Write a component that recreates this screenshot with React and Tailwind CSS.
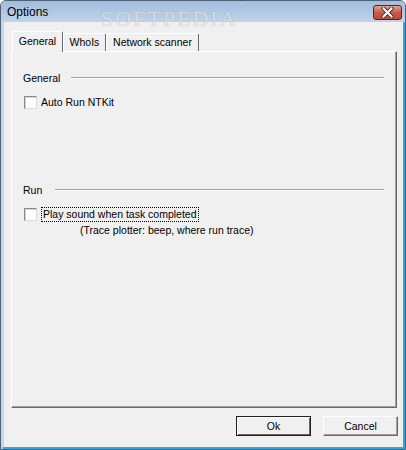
export default function App() {
  return (
    <div className="w-[406px] h-[450px] bg-white font-['Liberation_Sans',Arial,sans-serif] text-black">
      <div className="relative w-[406px] h-[450px] flex flex-col rounded-t-[6px] border border-[#4f6178] bg-[#c3d8ee] overflow-hidden">
        {/* title bar */}
        <div className="h-[21px] shrink-0 flex items-center justify-between pl-[6px] pr-[3px] bg-gradient-to-b from-[#a2bcdb] to-[#bfd4ec]">
          <span className="text-[12px] leading-none">Options</span>
          <div className="w-[29px] h-[15px] mt-[2px] rounded-[3px] border border-[#5a2020] bg-gradient-to-b from-[#e3a292] via-[#c95a45] to-[#c04a36] flex items-center justify-center">
            <svg width="13" height="11" viewBox="0 0 13 11">
              <path d="M2.5 1.5 L10.5 9.5 M10.5 1.5 L2.5 9.5" stroke="#3b3b3b" strokeWidth="4" strokeLinecap="square" />
              <path d="M2.5 1.5 L10.5 9.5 M10.5 1.5 L2.5 9.5" stroke="#ffffff" strokeWidth="2" strokeLinecap="square" />
            </svg>
          </div>
        </div>

        {/* client area */}
        <div className="flex-1 ml-[2px] border-r-2 border-b-2 border-[#33a3de]">
          <div className="h-full ml-px bg-[#f0f0f0] pl-[7px] pt-[9px] flex flex-col text-[10.5px] leading-[13px]">
            {/* tabs */}
            <div className="flex items-end">
              <div className="relative z-10 -mb-px ml-px w-[51px] h-[21px] flex items-center justify-center bg-[#f0f0f0] border-t border-l border-white border-r border-r-[#696969] rounded-t-[2px] pb-[1px]">
                General
              </div>
              <div className="w-[43px] h-[18px] flex items-center justify-center border-t border-l border-white border-r border-r-[#696969] rounded-t-[2px]">
                WhoIs
              </div>
              <div className="w-[93px] h-[18px] flex items-center justify-center border-t border-l border-white border-r border-r-[#696969] rounded-t-[2px]">
                Network scanner
              </div>
            </div>

            {/* panel */}
            <div className="w-[386px] h-[357px] shrink-0 border-t border-l border-white border-r border-b border-r-[#696969] border-b-[#696969] shadow-[inset_-1px_-1px_0_#a0a0a0] pl-[11px] pr-[12px] pt-[19px] flex flex-col">
              <div className="h-[14px] flex items-center">
                <span className="w-[48px]">General</span>
                <div className="flex-1 h-[2px] border-t border-[#a0a0a0] border-b border-b-white" />
              </div>
              <div className="mt-[11px] h-[13px] flex items-center">
                <div className="ml-px w-[13px] h-[13px] bg-white border border-t-[#8a8a8a] border-l-[#8a8a8a] border-r-[#dcdcdc] border-b-[#dcdcdc] shadow-[inset_1px_1px_0_#d4d4d4]" />
                <span className="ml-[4px]">Auto Run NTKit</span>
              </div>

              <div className="mt-[74px] h-[14px] flex items-center">
                <span className="w-[32px]">Run</span>
                <div className="flex-1 h-[2px] border-t border-[#a0a0a0] border-b border-b-white" />
              </div>
              <div className="mt-[11px] h-[13px] flex items-center">
                <div className="ml-px w-[13px] h-[13px] bg-white border border-t-[#8a8a8a] border-l-[#8a8a8a] border-r-[#dcdcdc] border-b-[#dcdcdc] shadow-[inset_1px_1px_0_#d4d4d4]" />
                <span className="ml-[4px] h-[15px] px-px border border-dotted border-black flex items-center">
                  Play sound when task completed
                </span>
              </div>
              <div className="mt-[3px] h-[13px] pl-[57px]">(Trace plotter: beep, where run trace)</div>
            </div>

            {/* buttons */}
            <div className="mt-[8px] flex justify-end gap-[12px] pr-[5px]">
              <button className="w-[75px] h-[20px] bg-[#f0f0f0] border border-[#1f1f1f] shadow-[inset_1px_1px_0_#ffffff,inset_-1px_-1px_0_#696969] text-[10.5px] leading-none">
                Ok
              </button>
              <button className="w-[75px] h-[20px] bg-[#f0f0f0] border border-t-white border-l-white border-r-[#696969] border-b-[#696969] shadow-[inset_-1px_-1px_0_#a0a0a0] text-[10.5px] leading-none">
                Cancel
              </button>
            </div>
          </div>
        </div>

        {/* watermark */}
        <div className="absolute left-[100px] top-[7px] font-['Liberation_Serif',serif] text-[22px] leading-none tracking-[2px] text-white/60 [text-shadow:0_0_1px_rgba(120,120,120,0.5)] pointer-events-none">
          SOFTPEDIA<sup className="text-[7px] align-top">™</sup>
        </div>
      </div>
    </div>
  );
}
